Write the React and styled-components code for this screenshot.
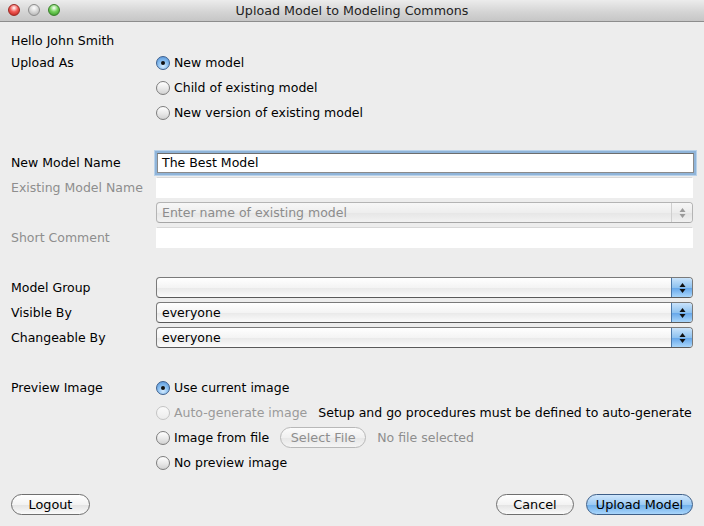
import styled, { createGlobalStyle } from "styled-components";

const GlobalStyle = createGlobalStyle`
  html, body {
    margin: 0;
    padding: 0;
    background: #ededed;
  }
  body {
    font-family: "Lucida Grande", "DejaVu Sans", sans-serif;
    font-size: 12.5px;
    color: #000;
  }
`;

const Window = styled.div`
  width: 704px;
  height: 526px;
  display: flex;
  flex-direction: column;
  background: #ededed;
  overflow: hidden;
`;

const TitleBar = styled.div`
  height: 22px;
  flex: none;
  box-sizing: border-box;
  position: relative;
  display: flex;
  align-items: center;
  justify-content: center;
  background: linear-gradient(#ececec, #d3d3d3 60%, #c6c6c6);
  border-bottom: 1px solid #8d8d8d;
  font-size: 12.7px;
  color: #222;
`;

const Lights = styled.div`
  position: absolute;
  left: 8px;
  top: 4px;
  display: flex;
  gap: 8px;
`;

const Light = styled.span`
  width: 12px;
  height: 12px;
  border-radius: 50%;
  box-sizing: border-box;
  border: 1px solid ${(p) => p.$edge};
  background: radial-gradient(circle at 50% 30%, #fff 0, ${(p) => p.$color} 45%, ${(p) => p.$dark} 100%);
`;

const Content = styled.div`
  display: flex;
  flex-direction: column;
  padding: 9px 11px 0 11px;
`;

const Row = styled.div`
  display: grid;
  grid-template-columns: 145px 1fr;
  align-items: center;
  height: ${(p) => p.$h || 25}px;
`;

const Spacer = styled.div`
  height: ${(p) => p.$h || 25}px;
`;

const Label = styled.div`
  color: ${(p) => (p.$disabled ? "#8e8e8e" : "#000")};
  white-space: nowrap;
`;

const Control = styled.div`
  display: flex;
  align-items: center;
  gap: 11px;
  white-space: nowrap;
`;

const RadioWrap = styled.label`
  display: flex;
  align-items: center;
  gap: 4px;
  color: ${(p) => (p.$disabled ? "#9a9a9a" : "#000")};
`;

const RadioDot = styled.span`
  width: 14px;
  height: 14px;
  box-sizing: border-box;
  border-radius: 50%;
  border: 1px solid ${(p) => (p.$checked ? "#3c5f8d" : p.$disabled ? "#c4c4c4" : "#7d7d7d")};
  background: ${(p) =>
    p.$checked
      ? "radial-gradient(circle at 50% 75%, #d6ecff 0, #8cc0f0 45%, #4f8fd6 100%)"
      : p.$disabled
      ? "linear-gradient(#fafafa, #ececec)"
      : "linear-gradient(#ffffff, #e8e8e8 55%, #d2d2d2)"};
  display: flex;
  align-items: center;
  justify-content: center;
  &::after {
    content: "";
    display: ${(p) => (p.$checked ? "block" : "none")};
    width: 4px;
    height: 4px;
    border-radius: 50%;
    background: #111;
  }
`;

const TextField = styled.div`
  width: 100%;
  height: ${(p) => (p.$focused ? 20 : 21)}px;
  box-sizing: border-box;
  background: #fff;
  border: 1px solid ${(p) => (p.$focused ? "#8a8a8a" : "transparent")};
  border-top-color: ${(p) => (p.$focused ? "#6d6d6d" : "#d8d8d8")};
  box-shadow: ${(p) => (p.$focused ? "0 0 0 2px #8fb4d9, 0 0 0 3px #b9d2ea" : "none")};
  padding: 0 4px;
  display: flex;
  align-items: center;
  margin: 0 ${(p) => (p.$focused ? 1 : 0)}px;
`;

const Combo = styled.div`
  width: 100%;
  height: 21px;
  box-sizing: border-box;
  border-radius: 4px;
  border: 1px solid ${(p) => (p.$disabled ? "#b4b4b4" : "#7a7a7a")};
  border-bottom-color: ${(p) => (p.$disabled ? "#a6a6a6" : "#5a5a5a")};
  background: ${(p) =>
    p.$disabled
      ? "linear-gradient(#f7f7f7, #eeeeee 50%, #e6e6e6 52%, #f2f2f2)"
      : "linear-gradient(#ffffff, #f4f4f4 50%, #e9e9e9 52%, #fbfbfb)"};
  display: flex;
  align-items: center;
  overflow: hidden;
  color: ${(p) => (p.$disabled ? "#8c8c8c" : "#000")};
`;

const ComboText = styled.div`
  flex: 1;
  padding-left: 5px;
`;

const Arrows = styled.div`
  width: 20px;
  align-self: stretch;
  border-left: 1px solid ${(p) => (p.$disabled ? "#cfcfcf" : "#4a77a8")};
  background: ${(p) =>
    p.$disabled
      ? "linear-gradient(#f6f6f6, #ececec 50%, #e3e3e3 52%, #f1f1f1)"
      : "linear-gradient(#c9e3fb, #8ec2f0 50%, #63a5e9 52%, #a9d6fb)"};
  display: flex;
  align-items: center;
  justify-content: center;
`;

const Button = styled.div`
  height: 21px;
  box-sizing: border-box;
  width: ${(p) => (p.$w ? `${p.$w}px` : "auto")};
  border-radius: 11px;
  display: flex;
  align-items: center;
  justify-content: center;
  white-space: nowrap;
  border: 1px solid ${(p) => (p.$primary ? "#3e5f88" : p.$disabled ? "#b8b8b8" : "#6f6f6f")};
  background: ${(p) =>
    p.$primary
      ? "linear-gradient(#cfe6fc, #9ccaf3 50%, #6eaeea 52%, #a8d5fb)"
      : p.$disabled
      ? "linear-gradient(#fbfbfb, #f0f0f0 50%, #e7e7e7 52%, #f4f4f4)"
      : "linear-gradient(#ffffff, #f3f3f3 50%, #e3e3e3 52%, #fafafa)"};
  color: ${(p) => (p.$disabled ? "#8e8e8e" : "#000")};
  font-size: 12.8px;
`;

const Footer = styled.div`
  display: flex;
  align-items: center;
  justify-content: space-between;
  margin-top: 19px;
  padding: 0 11px;
`;

const FooterRight = styled.div`
  display: flex;
  gap: 12px;
`;

const Note = styled.span`
  color: ${(p) => (p.$muted ? "#8e8e8e" : "#000")};
`;

function Radio({ checked, disabled, children }) {
  return (
    <RadioWrap $disabled={disabled}>
      <RadioDot $checked={checked} $disabled={disabled} />
      {children}
    </RadioWrap>
  );
}

function UpDown({ disabled }) {
  const c = disabled ? "#9a9a9a" : "#111";
  return (
    <svg width="7" height="12" viewBox="0 0 7 12">
      <path d="M3.5 1 L6.5 5 L0.5 5 Z" fill={c} />
      <path d="M3.5 11 L6.5 7 L0.5 7 Z" fill={c} />
    </svg>
  );
}

function Select({ value, disabled }) {
  return (
    <Combo $disabled={disabled}>
      <ComboText>{value}</ComboText>
      <Arrows $disabled={disabled}>
        <UpDown disabled={disabled} />
      </Arrows>
    </Combo>
  );
}

export default function App() {
  return (
    <>
      <GlobalStyle />
      <Window>
        <TitleBar>
          <Lights>
            <Light $color="#f25a55" $dark="#b51b14" $edge="#9c2a24" />
            <Light $color="#d9d9d9" $dark="#a9a9a9" $edge="#8e8e8e" />
            <Light $color="#74d15b" $dark="#2e8f20" $edge="#3a7f2b" />
          </Lights>
          Upload Model to Modeling Commons
        </TitleBar>
        <Content>
          <Row $h={19}>
            <Label>Hello John Smith</Label>
          </Row>
          <Row>
            <Label>Upload As</Label>
            <Control>
              <Radio checked>New model</Radio>
            </Control>
          </Row>
          <Row>
            <span />
            <Control>
              <Radio>Child of existing model</Radio>
            </Control>
          </Row>
          <Row>
            <span />
            <Control>
              <Radio>New version of existing model</Radio>
            </Control>
          </Row>
          <Spacer />
          <Row>
            <Label>New Model Name</Label>
            <TextField $focused>The Best Model</TextField>
          </Row>
          <Row>
            <Label $disabled>Existing Model Name</Label>
            <TextField />
          </Row>
          <Row>
            <span />
            <Select value="Enter name of existing model" disabled />
          </Row>
          <Row>
            <Label $disabled>Short Comment</Label>
            <TextField />
          </Row>
          <Spacer />
          <Row>
            <Label>Model Group</Label>
            <Select value="" />
          </Row>
          <Row>
            <Label>Visible By</Label>
            <Select value="everyone" />
          </Row>
          <Row>
            <Label>Changeable By</Label>
            <Select value="everyone" />
          </Row>
          <Spacer />
          <Row>
            <Label>Preview Image</Label>
            <Control>
              <Radio checked>Use current image</Radio>
            </Control>
          </Row>
          <Row>
            <span />
            <Control>
              <Radio disabled>Auto-generate image</Radio>
              <Note>Setup and go procedures must be defined to auto-generate</Note>
            </Control>
          </Row>
          <Row>
            <span />
            <Control>
              <Radio>Image from file</Radio>
              <Button $disabled $w={86}>Select File</Button>
              <Note $muted>No file selected</Note>
            </Control>
          </Row>
          <Row>
            <span />
            <Control>
              <Radio>No preview image</Radio>
            </Control>
          </Row>
        </Content>
        <Footer>
          <Button $w={79}>Logout</Button>
          <FooterRight>
            <Button $w={78}>Cancel</Button>
            <Button $primary $w={107}>Upload Model</Button>
          </FooterRight>
        </Footer>
      </Window>
    </>
  );
}
